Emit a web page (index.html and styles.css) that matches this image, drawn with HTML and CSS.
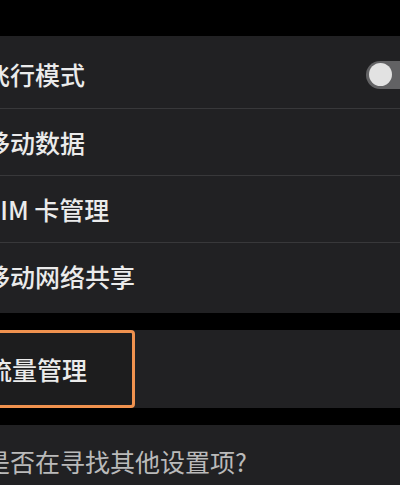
FILE: index.html
```html
<!DOCTYPE html>
<html lang="zh-CN">
<head>
  <meta charset="UTF-8" />
  <meta name="viewport" content="width=device-width, initial-scale=1" />
  <title>移动网络</title>
  <link rel="stylesheet" href="styles.css">
</head>
<body>
  <div class="group first">
    <div class="row">
      <span class="label">飞行模式</span>
      <span class="switch"><span class="knob"></span></span>
    </div>
    <div class="row"><span class="label">移动数据</span></div>
    <div class="row"><span class="label">SIM 卡管理</span></div>
    <div class="row"><span class="label">移动网络共享</span></div>
  </div>

  <div class="group single">
    <div class="focus"><span class="label">流量管理</span></div>
  </div>

  <div class="group hint">
    <span class="question">是否在寻找其他设置项?</span>
  </div>
</body>
</html>
```

FILE: styles.css
```css
body { margin: 0; background: #000; overflow: hidden; height: 485px; font-family: "Noto Sans CJK SC", "Noto Sans", sans-serif; }
.group { background: #212123; }
.first { margin-top: 36px; padding: 5px 0 4px; }
.row { height: 67px; display: flex; align-items: center; justify-content: space-between; }
.row + .row { border-top: 1px solid #38383a; height: 66px; }
.label { margin-left: -15px; font-size: 25px; font-weight: 500; color: #ebebeb; line-height: 1; }
.switch { width: 52px; height: 28px; margin-right: -18px; border-radius: 14px; background: #626264; display: flex; align-items: center; padding-left: 3px; box-sizing: border-box; }
.knob { width: 23px; height: 23px; border-radius: 50%; background: #e2e2e2; }
.single { margin-top: 17px; height: 78px; display: flex; }
.focus { width: 150px; margin-left: -15px; padding-left: 15px; box-sizing: border-box; border: 3px solid #f0924f; border-radius: 4px; background: #1d1d1e; display: flex; align-items: center; }
.focus .label { margin-left: -16px; }
.hint { margin-top: 17px; height: 80px; padding-top: 21px; box-sizing: border-box; }
.question { display: block; margin-left: -15px; font-size: 25px; color: #bababa; line-height: 1.2; }
```
